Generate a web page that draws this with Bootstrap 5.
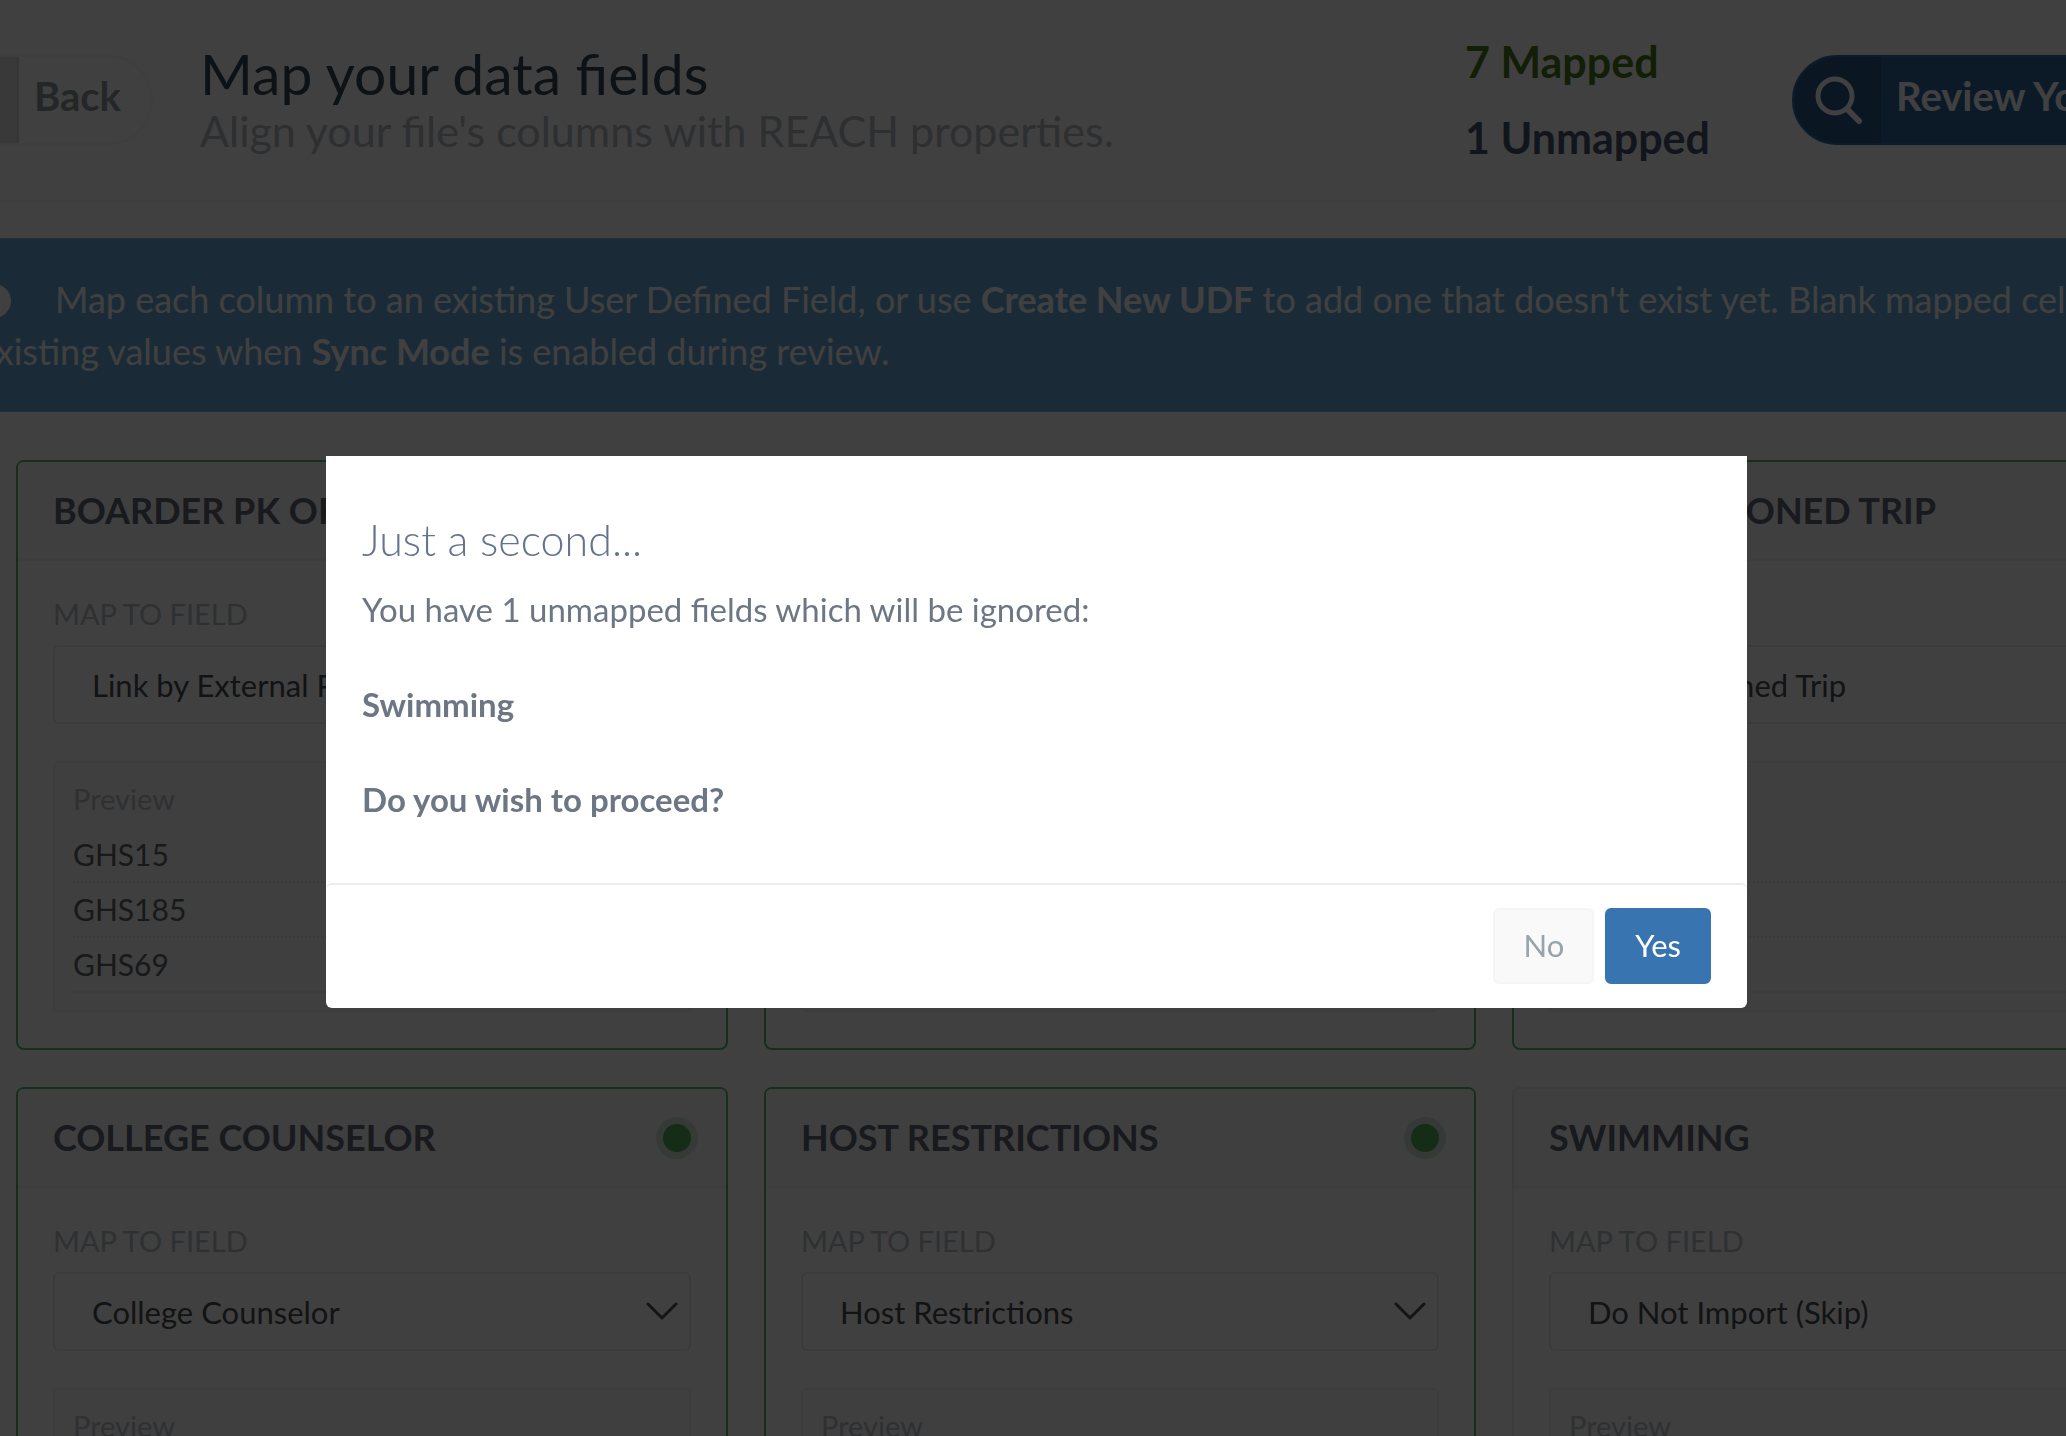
<!DOCTYPE html>
<html lang="en">
<head>
<meta charset="utf-8">
<meta name="viewport" content="width=device-width, initial-scale=1">
<title>Map your data fields</title>
<link href="https://cdn.jsdelivr.net/npm/bootstrap@5.3.0/dist/css/bootstrap.min.css" rel="stylesheet">
<style>
  body { font-family: Lato, "Open Sans", sans-serif; background: #fff; color: #6c757d; height: 100vh; overflow: hidden; }

  /* The mapping sheet is wider than the window and scrolled a little to the right */
  .sheet { margin-left: -69px; width: calc(100% + 310px); }

  .sheet-head { min-height: 202px; border-bottom: 2px solid #f8f8f8; }
  .sheet-head h1 { font-size: 57px; line-height: 62px; color: #34495e; font-weight: 400; }
  .sheet-head p { font-size: 43px; line-height: 54px; color: #b4bcc2; }
  .tallies { font-size: 43px; line-height: 76px; font-weight: 700; margin-right: 82px; }
  .tally-ok { color: #4c7a1c; }
  .tally-open { color: #4a5a70; }

  .pill { height: 90px; border-radius: 45px; overflow: hidden; font-size: 40px; font-weight: 700; line-height: 78px; padding: 0; border: 2px solid #f8f8f8; }
  .pill-icon { width: 86px; height: 100%; flex: none; }
  .pill-text { padding: 0 30px 8px 15px; }
  .pill-back { background: #fff; color: #8e989c; margin-right: 47px; }
  .pill-back .pill-icon { background: #e2e2e2; border-right: 2px solid #d4d4d4; }
  .pill-review { background: #31699f; border-color: #3672ad; color: #fff; width: 515px; }
  .pill-review .pill-icon { background: #2a5c8c; border-right: 2px solid #265480; width: 87px; padding-left: 4px; }

  .notice { background: #68acdc; border: 1px solid #7cbcea; color: #fff; font-size: 36px; line-height: 52px; padding: 34px 45px; margin: 36px 0 48px; border-radius: 0; white-space: nowrap; }
  .notice svg { margin: -6px 44px 0 0; }

  .field-grid { display: grid; grid-template-columns: repeat(3, minmax(0, 1fr)); gap: 37px 36px; padding: 0 83px 0 85px; }
  .field-card { border: 2px solid #ececec; border-radius: 8px; background: #fff; }
  .field-card.is-mapped { border-color: #5cb874; }
  .field-card .card-header { height: 99px; padding: 0 35px; background: #f9f9f9; border-bottom: 2px solid #f2f2f2; }
  .field-card h2 { font-size: 36px; line-height: 40px; padding-bottom: 2px; font-weight: 700; color: #626a78; }
  .field-card .card-body { padding: 36px 35px; }
  .field-card .form-label { font-size: 29px; line-height: 34px; color: #b8c0c6; margin-bottom: 14px; display: block; }
  .field-card .form-select { height: 79px; font-size: 31px; line-height: 40px; color: #4a4e52; border: 2px solid #ebebeb; border-radius: 6px; padding: 0 60px 0 37px;
    background-image: url("data:image/svg+xml,%3Csvg xmlns='http://www.w3.org/2000/svg' viewBox='0 0 32 20'%3E%3Cpath d='M2 2l14 14L30 2' fill='none' stroke='%23505050' stroke-width='3' stroke-linecap='round' stroke-linejoin='round'/%3E%3C/svg%3E");
    background-size: 32px 20px; background-position: right 11px center; }
  .dot { width: 28px; height: 28px; border-radius: 50%; background: #54b05c; box-shadow: 0 0 0 7px #d4e6d7; flex: none; }
  .preview { margin-top: 37px; border: 2px solid #f3f3f3; border-radius: 6px; background: #fbfbfb; padding: 16px 18px 17px; }
  .preview-title { font-size: 29px; line-height: 40px; color: #b8c0c6; margin: 0 0 9px; }
  .preview li { font-size: 30px; line-height: 53px; height: 55px; color: #626668; border-bottom: 2px dotted #e6e6e6; }

  .modal-backdrop { --bs-backdrop-opacity: .75; }
  .modal { padding-left: 7px; }
  .modal-dialog { max-width: 1421px; margin-top: 456px; margin-bottom: 0; }
  .modal-content { border: 0; border-radius: 0 0 6px 6px; color: #6c7684; }
  .modal-body { padding: 58px 36px 60px; font-size: 33px; line-height: 48px; }
  .modal-body h2 { font-size: 43px; line-height: 52px; font-weight: 300; color: #64748f; margin-bottom: 19px; }
  .modal-body p { margin-bottom: 47px; }
  .modal-footer { padding: 23px 36px 24px; gap: 11px; border-top: 2px solid #ececec; border-radius: 6px; }
  .modal-footer .btn { margin: 0; height: 76px; padding: 0 28px 2px; font-size: 31px; line-height: 70px; border-radius: 6px; border-width: 2px; }
  .btn-no { background: #f9f9f9; border-color: #f5f5f5; color: #98a4aa; }
  .btn-yes { background: #3875b0; border-color: #3875b0; color: #fff; }
</style>
<script src="https://cdn.jsdelivr.net/npm/bootstrap@5.3.0/dist/js/bootstrap.bundle.min.js"></script>
</head>
<body>
<div class="sheet">
  <header class="sheet-head d-flex align-items-center">
    <button type="button" class="btn pill pill-back d-flex">
      <span class="pill-icon"></span><span class="pill-text">Back</span>
    </button>
    <div class="flex-grow-1">
      <h1 class="mb-0">Map your data fields</h1>
      <p class="mb-0">Align your file's columns with REACH properties.</p>
    </div>
    <div class="tallies">
      <div class="tally-ok">7 Mapped</div>
      <div class="tally-open">1 Unmapped</div>
    </div>
    <button type="button" class="btn pill pill-review d-flex">
      <span class="pill-icon d-flex align-items-center justify-content-center">
        <svg width="50" height="50" viewBox="0 0 50 50" fill="none" stroke="#fff" stroke-linecap="round" aria-hidden="true"><circle cx="21" cy="21" r="17" stroke-width="5"/><path d="M33 34l12 12" stroke-width="6"/></svg>
      </span><span class="pill-text text-nowrap">Review Your Mapping</span>
    </button>
  </header>

  <div class="alert notice" role="note">
    <svg width="34" height="34" viewBox="0 0 34 34" aria-hidden="true"><circle cx="17" cy="17" r="17" fill="#fff"/><path d="M17 15v11M17 8v3" stroke="#68acdc" stroke-width="4"/></svg>Map each column to an existing User Defined Field, or use <strong>Create New UDF</strong> to add one that doesn't exist yet. Blank mapped cells will clear<br>existing values when <strong>Sync Mode</strong> is enabled during review.
  </div>

  <main class="field-grid">
    <section class="card field-card is-mapped">
      <div class="card-header d-flex align-items-center justify-content-between"><h2 class="mb-0">BOARDER PK OR ID</h2><span class="dot"></span></div>
      <div class="card-body">
        <label class="form-label" for="f1">MAP TO FIELD</label>
        <select class="form-select" id="f1"><option>Link by External PK</option></select>
        <div class="preview"><p class="preview-title">Preview</p><ul class="list-unstyled mb-0"><li>GHS15</li><li>GHS185</li><li>GHS69</li></ul></div>
      </div>
    </section>
    <section class="card field-card is-mapped">
      <div class="card-header d-flex align-items-center justify-content-between"><h2 class="mb-0">ADVISOR</h2><span class="dot"></span></div>
      <div class="card-body">
        <label class="form-label" for="f2">MAP TO FIELD</label>
        <select class="form-select" id="f2"><option>Advisor</option></select>
        <div class="preview"><p class="preview-title">Preview</p><ul class="list-unstyled mb-0"><li></li><li></li><li></li></ul></div>
      </div>
    </section>
    <section class="card field-card is-mapped">
      <div class="card-header d-flex align-items-center justify-content-between"><h2 class="mb-0">UNCHAPERONED TRIP</h2><span class="dot"></span></div>
      <div class="card-body">
        <label class="form-label" for="f3">MAP TO FIELD</label>
        <select class="form-select" id="f3"><option>Unchaperoned Trip</option></select>
        <div class="preview"><p class="preview-title">Preview</p><ul class="list-unstyled mb-0"><li>Yes</li><li>Yes</li><li>No</li></ul></div>
      </div>
    </section>
    <section class="card field-card is-mapped">
      <div class="card-header d-flex align-items-center justify-content-between"><h2 class="mb-0">COLLEGE COUNSELOR</h2><span class="dot"></span></div>
      <div class="card-body">
        <label class="form-label" for="f4">MAP TO FIELD</label>
        <select class="form-select" id="f4"><option>College Counselor</option></select>
        <div class="preview"><p class="preview-title">Preview</p></div>
      </div>
    </section>
    <section class="card field-card is-mapped">
      <div class="card-header d-flex align-items-center justify-content-between"><h2 class="mb-0">HOST RESTRICTIONS</h2><span class="dot"></span></div>
      <div class="card-body">
        <label class="form-label" for="f5">MAP TO FIELD</label>
        <select class="form-select" id="f5"><option>Host Restrictions</option></select>
        <div class="preview"><p class="preview-title">Preview</p></div>
      </div>
    </section>
    <section class="card field-card">
      <div class="card-header d-flex align-items-center justify-content-between"><h2 class="mb-0">SWIMMING</h2></div>
      <div class="card-body">
        <label class="form-label" for="f6">MAP TO FIELD</label>
        <select class="form-select" id="f6"><option>Do Not Import (Skip)</option></select>
        <div class="preview"><p class="preview-title">Preview</p></div>
      </div>
    </section>
  </main>
</div>

<div class="modal-backdrop show"></div>
<div class="modal show d-block" tabindex="-1" role="dialog" aria-modal="true" aria-labelledby="confirmTitle">
  <div class="modal-dialog">
    <div class="modal-content">
      <div class="modal-body">
        <h2 id="confirmTitle">Just a second...</h2>
        <p>You have 1 unmapped fields which will be ignored:</p>
        <p><strong>Swimming</strong></p>
        <p class="mb-0"><strong>Do you wish to proceed?</strong></p>
      </div>
      <div class="modal-footer">
        <button type="button" class="btn btn-no">No</button>
        <button type="button" class="btn btn-yes">Yes</button>
      </div>
    </div>
  </div>
</div>
</body>
</html>
